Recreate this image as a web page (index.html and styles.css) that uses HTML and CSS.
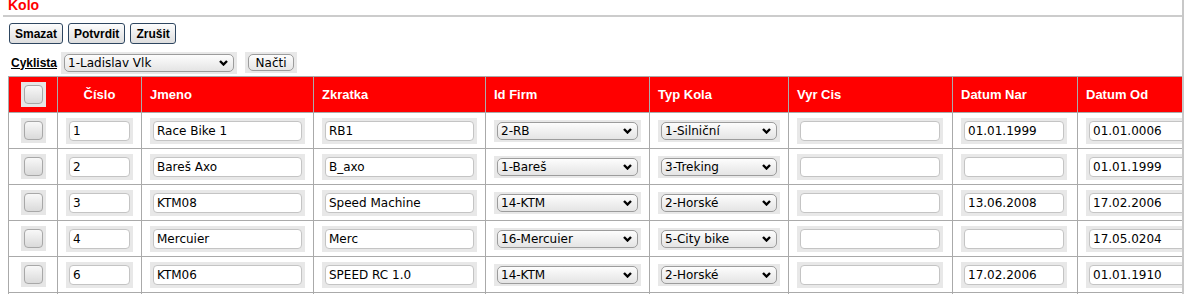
FILE: index.html
```html
<!DOCTYPE html>
<html lang="cs">
<head>
  <meta charset="UTF-8">
  <title>Kolo</title>
  <link rel="stylesheet" href="styles.css">
</head>
<body>
<div class="page">
  <h1 class="title">Kolo</h1>
  <div class="rule"></div>
  <div class="toolbar">
    <button type="button" class="action">Smazat</button>
    <button type="button" class="action">Potvrdit</button>
    <button type="button" class="action">Zrušit</button>
  </div>
  <form class="filter" action="#" method="get">
    <a href="#" class="filter-label">Cyklista</a>
    <span class="sel sel-cyklista">
      <select name="cyklista">
        <option>1-Ladislav Vlk</option>
        <option>2-Petr Novák</option>
      </select>
      <svg width="9" height="6" viewBox="0 0 9 6"><polyline points="1,1 4.5,4.5 8,1" fill="none" stroke="#000" stroke-width="2.4"/></svg>
    </span>
    <span class="frame"><button type="button" class="load">Načti</button></span>
  </form>

  <table class="grid">
    <colgroup>
      <col class="w-check"><col class="w-cislo"><col class="w-jmeno"><col class="w-zkratka">
      <col class="w-firma"><col class="w-typ"><col class="w-vyr"><col class="w-nar"><col class="w-od">
    </colgroup>
    <thead>
      <tr>
        <th class="center"><span class="check"><input type="checkbox"></span></th>
        <th class="center">Číslo</th>
        <th>Jmeno</th>
        <th>Zkratka</th>
        <th>Id Firm</th>
        <th>Typ Kola</th>
        <th>Vyr Cis</th>
        <th>Datum Nar</th>
        <th>Datum Od</th>
      </tr>
    </thead>
    <tbody id="rows"></tbody>
  </table>
</div>

<script>
const bikes = [
  ['1', 'Race Bike 1', 'RB1', '2-RB', '1-Silniční', '', '01.01.1999', '01.01.0006'],
  ['2', 'Bareš Axo', 'B_axo', '1-Bareš', '3-Treking', '', '', '01.01.1999'],
  ['3', 'KTM08', 'Speed Machine', '14-KTM', '2-Horské', '', '13.06.2008', '17.02.2006'],
  ['4', 'Mercuier', 'Merc', '16-Mercuier', '5-City bike', '', '', '17.05.0204'],
  ['6', 'KTM06', 'SPEED RC 1.0', '14-KTM', '2-Horské', '', '17.02.2006', '01.01.1910'],
  ['7', 'Author', 'AU', '2-RB', '1-Silniční', '', '', '01.01.2001']
];
const firms = ['1-Bareš', '2-RB', '14-KTM', '16-Mercuier'];
const types = ['1-Silniční', '2-Horské', '3-Treking', '5-City bike'];
const chevron = '<svg width="9" height="6" viewBox="0 0 9 6"><polyline points="1,1 4.5,4.5 8,1" fill="none" stroke="#000" stroke-width="2.4"/></svg>';

function textCell(cls, value) {
  return `<td><span class="field ${cls}"><input type="text" value="${value}"></span></td>`;
}

function selectCell(cls, list, value) {
  const options = list.map(o => `<option${o === value ? ' selected' : ''}>${o}</option>`).join('');
  return `<td><span class="sel ${cls}"><select>${options}</select>${chevron}</span></td>`;
}

const tbody = document.getElementById('rows');
bikes.forEach(b => {
  const tr = document.createElement('tr');
  tr.innerHTML =
    '<td class="center"><span class="check"><input type="checkbox"></span></td>' +
    textCell('f-cislo', b[0]) +
    textCell('f-jmeno', b[1]) +
    textCell('f-zkratka', b[2]) +
    selectCell('f-firma', firms, b[3]) +
    selectCell('f-typ', types, b[4]) +
    textCell('f-vyr', b[5]) +
    textCell('f-nar', b[6]) +
    textCell('f-od', b[7]);
  tbody.appendChild(tr);
});
</script>
</body>
</html>
```

FILE: styles.css
```css
body {
  margin: 0;
  padding: 0;
  background-color: #fff;
  font-family: "DejaVu Sans", sans-serif;
  font-size: 12px;
}
.page {
  width: 1182px;
  height: 294px;
  overflow: hidden;
  border-right: 2px solid #c8c8c8;
}
.title {
  margin: -2px 0 0 8px;
  font-family: "Liberation Sans", Arial, sans-serif;
  font-size: 14px;
  line-height: 14px;
  font-weight: bold;
  color: #ff0000;
}
.rule {
  margin: 3px 0 0 3px;
  border-bottom: 2px solid #cccccc;
}
.toolbar {
  display: flex;
  gap: 5px;
  margin: 6px 0 0 9px;
}
.action {
  height: 21px;
  padding: 0 5px;
  border: 1px solid #2e4660;
  border-radius: 3px;
  background: linear-gradient(#fdfdfd, #dedede);
  font-family: "Liberation Sans", Arial, sans-serif;
  font-size: 12px;
  font-weight: bold;
  color: #000;
}
.filter {
  display: flex;
  align-items: center;
  margin: 8px 0 0 11px;
  height: 21px;
}
.filter-label {
  font-family: "Liberation Sans", Arial, sans-serif;
  font-size: 12px;
  font-weight: bold;
  color: #000;
  margin-right: 4px;
}
.frame {
  display: inline-block;
  padding: 2px 3px;
  background-color: #e8e8e8;
  margin-left: 8px;
}
.load {
  display: block;
  height: 17px;
  width: 46px;
  padding: 0;
  border: 1px solid #9c9c9c;
  border-radius: 5px;
  background: linear-gradient(#fdfdfd, #e6e6e6);
  font-family: "DejaVu Sans", sans-serif;
  font-size: 12px;
  color: #000;
}

/* tabulka */
.grid {
  margin: 3px 0 0 8px;
  border-collapse: collapse;
  table-layout: fixed;
  width: 1194px;
}
.w-check { width: 49px; }
.w-cislo { width: 84px; }
.w-jmeno { width: 172px; }
.w-zkratka { width: 172px; }
.w-firma { width: 164px; }
.w-typ { width: 139px; }
.w-vyr { width: 164px; }
.w-nar { width: 125px; }
.w-od { width: 125px; }
.grid th,
.grid td {
  border: 1px solid #aaaaaa;
  height: 35px;
  padding: 0 0 0 8px;
  vertical-align: middle;
  text-align: left;
  white-space: nowrap;
  overflow: hidden;
}
.grid th {
  background-color: #ff0000;
  color: #fff;
  font-family: "Liberation Sans", Arial, sans-serif;
  font-size: 13px;
  font-weight: bold;
}
.grid .center {
  text-align: center;
  padding: 0;
}
.check {
  display: inline-block;
  vertical-align: middle;
  padding: 3px;
  background-color: #e6e6e6;
}
.check input {
  display: block;
  appearance: none;
  margin: 0;
  width: 19px;
  height: 19px;
  border: 1px solid #a8a8a8;
  border-radius: 4px;
  background: linear-gradient(#f8f8f8, #dadada);
}
.field {
  display: inline-block;
  vertical-align: middle;
  box-sizing: border-box;
  padding: 3px;
  background-color: #e8e8e8;
}
.field input {
  display: block;
  box-sizing: border-box;
  width: 100%;
  height: 20px;
  margin: 0;
  padding: 0 3px;
  border: 1px solid #c4c4c4;
  border-radius: 4px;
  background-color: #fff;
  font-family: "DejaVu Sans", sans-serif;
  font-size: 12px;
  color: #000;
}
.sel {
  position: relative;
  display: inline-block;
  vertical-align: middle;
  box-sizing: border-box;
  padding: 2px 3px;
  background-color: #e8e8e8;
}
.sel select {
  display: block;
  appearance: none;
  box-sizing: border-box;
  width: 100%;
  height: 18px;
  margin: 0;
  padding: 0 0 0 3px;
  border: 1px solid #9c9c9c;
  border-radius: 5px;
  background: linear-gradient(#fdfdfd, #e4e4e4);
  font-family: "DejaVu Sans", sans-serif;
  font-size: 12px;
  color: #000;
}
.sel svg {
  position: absolute;
  right: 9px;
  top: 8px;
}
.sel-cyklista { width: 176px; }
.f-cislo { width: 67px; }
.f-jmeno { width: 155px; }
.f-zkratka { width: 155px; }
.f-firma { width: 147px; }
.f-typ { width: 122px; }
.f-vyr { width: 146px; }
.f-nar { width: 106px; }
.f-od { width: 106px; }
```
